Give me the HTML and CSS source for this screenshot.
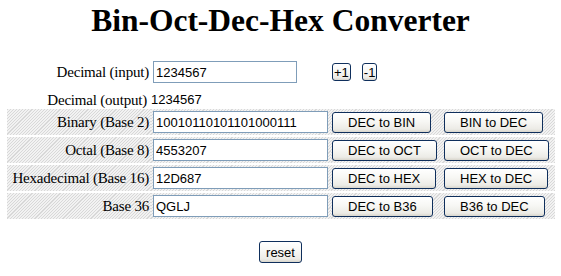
FILE: index.html
```html
<!DOCTYPE html>
<html>
<head>
<meta charset="utf-8">
<title>Bin-Oct-Dec-Hex Converter</title>
<link rel="stylesheet" href="styles.css">
</head>
<body>
<h1 class="title">Bin-Oct-Dec-Hex Converter</h1>
<form class="conv">
  <div class="lbl">Decimal (input)</div>
  <div class="fld"><input class="in in-short" type="text" value="1234567"></div>
  <div class="act act-span"><button type="button" class="btn tiny">+1</button><button type="button" class="btn tiny">-1</button></div>

  <div class="lbl out-lbl">Decimal (output)</div>
  <div class="out-val">1234567</div>
  <div class="act-span"></div>

  <div class="lbl hatch">Binary (Base 2)</div>
  <div class="fld hatch"><input class="in" type="text" value="10010110101101000111"></div>
  <div class="act hatch"><button type="button" class="btn">DEC to BIN</button></div>
  <div class="act hatch"><button type="button" class="btn">BIN to DEC</button></div>

  <div class="lbl hatch">Octal (Base 8)</div>
  <div class="fld hatch"><input class="in" type="text" value="4553207"></div>
  <div class="act hatch"><button type="button" class="btn">DEC to OCT</button></div>
  <div class="act hatch"><button type="button" class="btn">OCT to DEC</button></div>

  <div class="lbl hatch">Hexadecimal (Base 16)</div>
  <div class="fld hatch"><input class="in" type="text" value="12D687"></div>
  <div class="act hatch"><button type="button" class="btn">DEC to HEX</button></div>
  <div class="act hatch"><button type="button" class="btn">HEX to DEC</button></div>

  <div class="lbl hatch">Base 36</div>
  <div class="fld hatch"><input class="in" type="text" value="QGLJ"></div>
  <div class="act hatch"><button type="button" class="btn">DEC to B36</button></div>
  <div class="act hatch"><button type="button" class="btn">B36 to DEC</button></div>
</form>
<div class="bottom"><button type="button" class="btn reset">reset</button></div>
</body>
</html>
```
FILE: styles.css
```css
html, body {
  margin: 0;
  padding: 0;
  background: #ffffff;
}
body {
  font-family: "Liberation Serif", "Times New Roman", serif;
  font-size: 15px;
  color: #000;
}
.title {
  margin: 3px 0 0 0;
  font-size: 31.5px;
  line-height: 36px;
  font-weight: bold;
  text-align: center;
}
.conv {
  margin: 20px 6px 0 7px;
  display: grid;
  grid-template-columns: 144px 180px 112px 1fr;
  grid-template-rows: 26px 20px 26px 26px 26px 26px;
  row-gap: 2px;
}
.lbl {
  display: flex;
  align-items: center;
  justify-content: flex-end;
  padding-right: 2px;
  white-space: nowrap;
  letter-spacing: -0.2px;
}
.out-lbl {
  align-items: flex-end;
  padding-right: 4px;
  line-height: 16px;
  margin-bottom: -1px;
}
.out-val {
  display: flex;
  align-items: flex-end;
  font-family: "Liberation Sans", Arial, sans-serif;
  font-size: 13px;
  line-height: 16px;
  margin-bottom: -1px;
}
.fld {
  display: flex;
  align-items: center;
  padding-left: 2px;
}
.act {
  display: flex;
  align-items: center;
  padding-left: 1px;
  gap: 11px;
}
.act-span {
  grid-column: span 2;
}
.hatch {
  background: repeating-linear-gradient(135deg, #d8d8d8 0, #d8d8d8 0.8px, #f2f2f2 0.8px, #f2f2f2 2.2px);
}
.in {
  box-sizing: border-box;
  width: 175px;
  height: 22px;
  margin: 0;
  padding: 0 2px;
  border: 1px solid #7f9db9;
  background: #fff;
  font-family: "Liberation Sans", Arial, sans-serif;
  font-size: 13px;
  color: #000;
}
.in-short {
  width: 144px;
}
.btn {
  box-sizing: border-box;
  height: 21px;
  margin: 0;
  padding: 0 15px;
  border: 1px solid #0f2f5c;
  border-radius: 3px;
  background: linear-gradient(to bottom, #ffffff 0%, #f7f7f4 45%, #ecebe6 85%, #d8d5cc 100%);
  font-family: "Liberation Sans", Arial, sans-serif;
  font-size: 13px;
  color: #000;
  white-space: nowrap;
}
.tiny {
  height: 18px;
  padding: 0 1px;
}
.bottom {
  display: flex;
  justify-content: center;
  margin-top: 22px;
}
.reset {
  height: 22px;
  padding: 0 6px;
}
```
